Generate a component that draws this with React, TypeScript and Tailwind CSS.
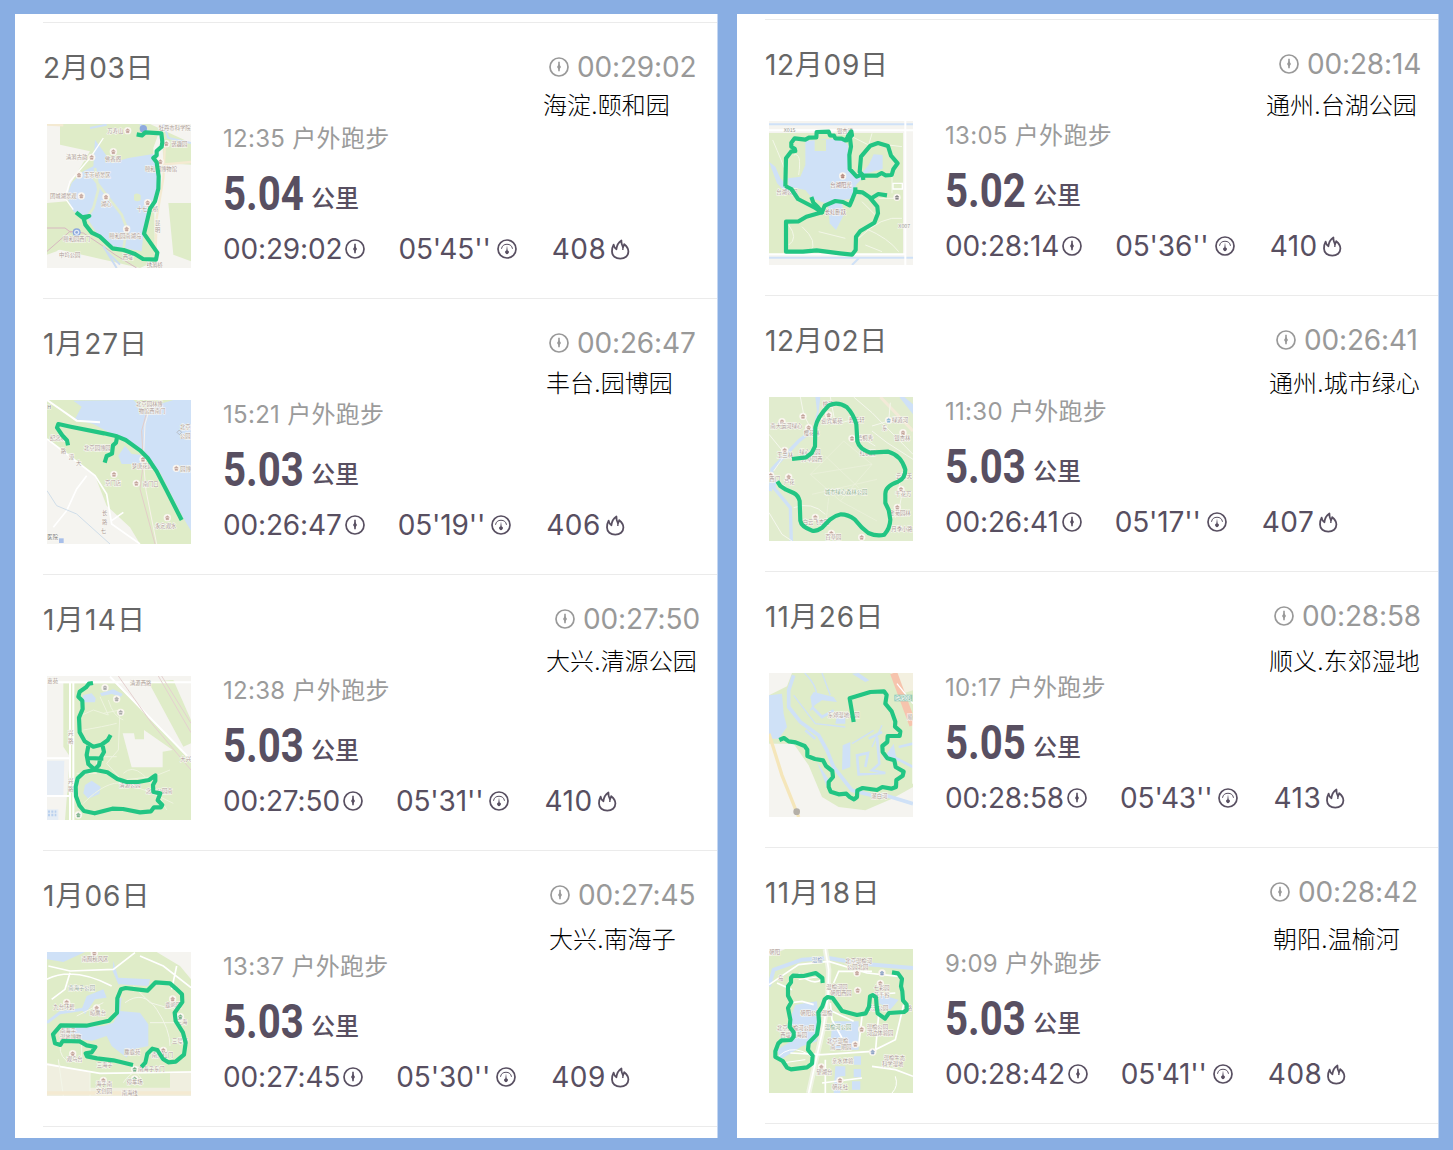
import React from 'react';

type Label = [number, number, string, string?];

interface MapProps {
  land: React.ReactNode;
  labels: Label[];
  pois?: [number, number, string?][];
  route: string[];
}

const GREEN = '#dfecc8';
const PAPER = '#f5f4f0';
const WATER = '#cfe1f7';

function RouteMap({ land, labels, pois = [], route }: MapProps) {
  return (
    <svg viewBox="21 18 432 432" className="block size-36 shrink-0">
      {land}
      {pois.map(([x, y, c], i) => (
        <g key={i}>
          <circle cx={x} cy={y} r="11" fill="#faf6f0" />
          <path d={`M${x - 6} ${y - 1}l6 -5l6 5zM${x - 4} ${y + 1}v5h8v-5`} fill={c ?? '#c4a59c'} stroke={c ?? '#c4a59c'} strokeWidth="1.5" />
        </g>
      ))}
      {labels.map(([x, y, t, c], i) => (
        <text
          key={i}
          x={x}
          y={y}
          fill={c ?? '#ab9a95'}
          stroke="#fbfaf5"
          strokeWidth="3"
          paintOrder="stroke"
          className="font-['Noto_Sans_CJK_SC',sans-serif] text-[16px]"
        >
          {t}
        </text>
      ))}
      {route.map((d) => (
        <path key={d} d={d} fill="none" stroke="#22c583" strokeWidth="12.5" strokeLinejoin="round" strokeLinecap="butt" />
      ))}
    </svg>
  );
}

const Base = ({ fill }: { fill: string }) => <rect x="21" y="18" width="432" height="432" fill={fill} />;
const Water = ({ d }: { d: string }) => <path d={d} fill={WATER} />;
const Land = ({ d, fill = GREEN }: { d: string; fill?: string }) => <path d={d} fill={fill} />;
const Road = ({ d, w = 4, c = '#fff' }: { d: string; w?: number; c?: string }) => (
  <path d={d} fill="none" stroke={c} strokeWidth={w} />
);

const SummerPalace = () => (
  <RouteMap
    land={
      <>
        <Base fill={PAPER} />
        <Land d="M60 18H330L453 75V140L370 135L365 20L340 90L345 430L300 450L60 395L21 400V255L80 250L90 200L150 100L60 80Z" />
        <Land d="M385 255H453V430L400 410Z" />
        <Land d="M21 270L75 285L120 340L50 400L21 410Z" />
        <Water d="M165 65L190 100L215 135L265 120L340 108L355 150L350 220L328 270L310 350L305 400L220 385L170 345L145 305L100 280L80 235L95 195L130 160L160 145Z" />
        <Land d="M282 230q10 -8 20 2v14q-10 8 -20 0z" />
        <Road d="M165 150L175 215L160 270L140 300M160 180L245 290L260 330L250 395" w={8} c="#e0ecd0" />
        <Road d="M190 60L150 120L90 190L75 240L100 275" w={4} />
        <Road d="M370 18L385 60L453 75M150 30L200 20M300 18L330 45" w={6} c={WATER} />
        <Road d="M375 70L370 180L350 300L345 450M365 140L453 132M21 20L70 22" w={7} c="#f4ead2" />
        <Road d="M21 400L90 340L130 345L190 385L225 410L290 450M21 330H75L95 345" w={3} c="#d7b8c0" />
        <Road d="M190 385L230 450M200 400L240 440" w={6} c="#cbdcf2" />
        <circle cx="310" cy="32" r="11" fill="#8ea9dd" />
        <circle cx="110" cy="343" r="12" fill="#8ea9dd" />
        <circle cx="110" cy="343" r="8" fill="#dfe8f7" />
        <circle cx="110" cy="343" r="4" fill="#8ea9dd" />
      </>
    }
    pois={[[263, 38], [220, 101], [155, 118], [117, 171], [124, 234], [198, 237], [379, 77], [361, 131], [323, 254], [260, 333]]}
    labels={[[202, 44, '万寿山'], [195, 128, '佛香阁'], [78, 124, '清漪古韵'], [132, 178, '玉带桥景区'], [30, 240, '团城湖景观'], [183, 263, '湖心'], [356, 35, '牡丹市科学院'], [394, 83, '谐趣园'], [315, 158, '颐和园博物馆'], [290, 280, '十七孔桥'], [208, 361, '颐和园南湖岛'], [70, 369, '颐和园西门'], [248, 423, '西堤'], [57, 418, '中坞公园'], [320, 446, '绣漪桥'], [345, 322, '昆'], [345, 342, '明']]}
    route={['M290 49L306 52L316 43L364 46L367 72L365 86L350 99V112L340 120L350 133L356 175L355 212L345 250L330 272L312 347L352 404L348 425L309 423L285 408L251 396L217 391L180 356L155 344L136 320L130 298', 'M108 283L127 298L148 294L128 304']}
  />
);

const GardenExpo = () => (
  <RouteMap
    land={
      <>
        <Base fill={PAPER} />
        <Land d="M21 18H453V450H300L270 400L200 335L165 245L120 210L21 135Z" />
        <Water d="M105 75L125 38L100 20L280 18L310 45L400 18H453V410L430 372L360 235L290 155L220 122L160 90Z" />
        <Water d="M235 185L255 155L275 180L300 182L320 210H245Z" />
        <Road d="M21 18L60 45L110 80L180 85" w={6} />
        <Road d="M21 135L100 195L165 245L200 300L215 390L300 450M215 380L250 355M140 245L110 285L80 350L40 400" w={5} />
        <Road d="M50 335L110 360L210 450M21 290L50 335" w={3} c="#cfdde9" />
        <Road d="M330 18L305 110L310 210L300 285L345 450" w={3} c="#e3cdc8" />
        <Road d="M335 25L315 90L310 200L318 290L350 450" w={3} c="#f8f2ec" />
        <path d="M418 108l7 7l-7 7l-7 -7z" fill="none" stroke="#aaa" strokeWidth="2" />
        <rect x="57" y="433" width="14" height="14" fill="#a8bfea" />
      </>
    }
    pois={[[222, 241], [289, 268], [309, 196], [382, 371], [409, 223]]}
    labels={[[22, 46, 'H', '#888'], [288, 36, '北京园林博'], [296, 57, '物馆西南门'], [420, 106, '北京'], [420, 132, '公园'], [30, 137, '纪念林'], [132, 169, '北京园博园'], [275, 222, '梦唐花园'], [195, 273, '京门店'], [308, 275, '南门口'], [345, 401, '永定观水'], [421, 230, '园博'], [186, 362, '长'], [186, 390, '路'], [182, 417, '七'], [22, 436, '医院', '#777'], [62, 178, '路'], [86, 196, '漳'], [108, 214, '大']]}
    route={['M84 154L81 139L66 123L51 101L55 90L92 98L192 118L231 127L257 138L300 169L323 192L350 232L380 290L425 378', 'M231 130L228 146L219 154L216 179L200 186L194 206']}
  />
);

const QingyuanPark = () => (
  <RouteMap
    land={
      <>
        <Base fill={PAPER} />
        <Land d="M70 40H225L453 270V450H75L90 260L70 230Z" />
        <Land d="M325 35L400 30L453 150V220L430 230Z" />
        <Land d="M248 190L282 190L285 208H312V180L398 240L368 245V292H275Z" fill={PAPER} />
        <path d="M21 272H73L70 378H21ZM21 418H55V450H21Z" fill="#e6edf5" />
        <Water d="M130 75L155 70L167 85L165 97H125Z" />
        <Water d="M180 70L220 58L248 72L243 80L215 72L185 78Z" />
        <Water d="M135 345L155 332L182 350L178 372L145 386L130 370Z" />
        <Road d="M21 37H453M90 37V450M100 37V450M21 265H90M21 378H90M210 20L453 270" w={6} />
        <Road d="M235 18L335 160L453 300M355 18L453 188M365 18L453 160" w={3} c="#e4d0cf" />
        <Road
          d="M115 140L160 120L205 135L180 80M190 130L240 120L235 240L200 280L245 330L340 320L390 300M130 180Q190 170 230 160M250 310Q300 260 380 420M130 400Q200 330 250 340T400 400M110 310H170V260H230M205 90Q220 140 250 150"
          w={3}
          c="#eef4df"
        />
        <path d="M24 425h25M24 435h25" stroke="#b9d0ee" strokeWidth="7" strokeDasharray="6 4" />
      </>
    }
    pois={[[195, 53, '#aaa'], [230, 87, '#aaa'], [242, 127, '#aaa'], [115, 435, '#79b18b']]}
    labels={[[22, 38, '嘉苑'], [270, 44, '清源西路'], [84, 195, '兴'], [84, 218, '路'], [84, 340, '兴'], [84, 363, '路'], [238, 350, '清源公园'], [318, 368, '念坛公园南'], [421, 272, '大兴']]}
    route={['M159 39L147 41L138 52L119 65L115 80L127 92L128 117L117 143L119 187L134 214L160 230L184 224L203 211L212 195', 'M145 228L140 255L145 282L164 299L177 285L181 265L192 246L188 228M143 264L190 266', 'M164 299L202 307L232 327L260 336L294 336L327 330L346 316L346 332L339 345L340 366L361 370L353 391L367 405L363 412L342 412L333 424L300 427L249 417L217 416L164 430L132 423L118 406L108 379L107 350L113 325L133 306L164 299']}
  />
);

const NanhaiziPark = () => (
  <RouteMap
    land={
      <>
        <Base fill={GREEN} />
        <Land d="M350 18H453V100L420 60Z" fill={PAPER} />
        <Land d="M21 350L180 385L453 375V450H21Z" fill="#f0efe0" />
        <Land d="M150 380H390V425H150Z" />
        <Water d="M21 18H135L70 48L21 40Z" />
        <Water d="M220 45L235 95L330 100L325 120L235 115L218 75Z" />
        <Water d="M60 245L130 242L190 240L220 230L240 195L300 200L325 235L325 300L270 312L260 335L215 300L200 270L155 285L60 270Z" />
        <Water d="M125 190L140 150L190 130L200 155L165 160L135 205Z" />
        <Road d="M240 155L235 210M21 230L60 200L130 190" w={9} c={WATER} />
        <Road d="M25 60L90 75L220 70L285 20M300 30L370 60L453 125M410 60L395 130M21 355L180 382L453 378M20 100Q100 60 215 120M90 80L75 130L35 160" w={5} />
        <Road d="M65 280Q90 260 125 280V345H80Q50 320 65 280M255 170Q310 130 350 190T390 300M280 120L330 170L400 190M330 230L410 230M110 210L190 170M55 340L70 450M150 380V450M250 410Q290 350 310 415" w={3} c="#f3f6e9" />
        <Road d="M21 441H453" w={10} c="#f4ead2" />
      </>
    }
    pois={[[163, 22], [80, 169], [170, 186], [398, 159], [421, 212, '#79b18b'], [98, 323], [190, 403], [284, 370, '#79b18b'], [284, 399, '#79b18b'], [370, 313]]}
    labels={[[125, 45, '南囿秋风区'], [85, 133, '南海子公园', '#98aaa0'], [40, 188, '九台环碧'], [150, 206, '晾鹰台'], [376, 182, '鹿鸣园'], [60, 260, '南海子'], [60, 280, '湿地博物'], [80, 344, '观鸟台'], [170, 363, '三海子'], [253, 323, '麋鹿苑'], [335, 334, '南大红门'], [294, 376, '南海子东门'], [260, 415, '停车场'], [168, 420, '海子南'], [168, 440, '文创园'], [245, 446, '南海线'], [396, 290, '三号桥'], [410, 235, '三海']]}
    route={['M279 357L220 343L171 337L141 331L137 322L155 319L166 303L140 298L119 286L68 285L61 297L45 292L39 265L62 238L139 239L207 224L231 200L232 157L243 130L257 126L322 134L347 109L390 112L407 127L426 145L427 168L404 200L407 225L429 260L437 290L432 326L407 347L385 349L369 339L352 312L337 308L322 323L316 350L304 363']}
  />
);

const TaihuPark = () => (
  <RouteMap
    land={
      <>
        <Base fill={PAPER} />
        <Land d="M21 54H423V418H21Z" />
        <Water d="M130 78L235 70L258 90L262 165L290 185L320 150L335 118L362 120V162L315 175L282 210L275 250L240 255L190 265L150 250L130 225L80 215L78 190L115 185L130 150Z" />
        <Water d="M198 265L240 262L245 300L222 345L203 325Z" />
        <Water d="M21 140L40 155L55 190L90 225L80 240L45 205Z" />
        <Land d="M158 75H192V108H158Z" />
        <Road d="M21 28H453M21 428H453M290 430L270 450" w={6} c={WATER} />
        <Road d="M21 46H453M430 18V450M21 418H430" w={6} />
        <Road d="M32 75Q60 140 75 180M80 330Q110 370 80 390M120 335Q170 380 145 410M170 350L250 370M290 370Q360 300 420 310M310 340Q380 370 410 410M300 260L340 300M340 85L420 95M390 180V235M270 65L320 90L330 55M350 250L415 250M95 120Q120 110 110 180M310 390L360 410" w={3} c="#f3f7e8" />
        <path d="M393 205h28v17h-28z" fill="none" stroke="#fff" strokeWidth="4" />
      </>
    }
    pois={[[242, 183, '#b08278'], [405, 247, '#888']]}
    labels={[[65, 51, 'X015', '#999'], [225, 54, '银杏湾'], [205, 216, '台湖阳光', '#9b8588'], [43, 237, '台湖公园'], [188, 298, '长虹卧跃', '#9b8588'], [409, 339, 'X007', '#999']]}
    route={['M70 215L72 130L87 110L100 108L98 101L88 95V83L98 70L130 74L141 68L163 67L164 51L200 50L204 61L216 62L220 70L239 71L250 76L263 61L267 95L262 120L263 162L284 185L302 178', 'M258 63L268 49L270 61L255 76Z', 'M304 195L302 180L293 171L297 125L325 92L348 84L378 93L387 122L407 145L394 163L389 180L370 181L359 174L345 182H302', 'M70 213L88 222L108 252L160 279L180 292L133 305L110 319L72 320V410H123L164 406L234 415L270 419L281 405L282 365L295 348L337 323L348 295L346 275L326 251L349 237L375 241', 'M148 246L154 263L168 277L180 292L188 272L220 258L243 261L263 271L272 250L280 230L301 232L326 249', 'M280 217V232']}
  />
);

const GreenHeart = () => (
  <RouteMap
    land={
      <>
        <Base fill="#e1ecce" />
        <Water d="M160 18H175L170 60L165 110L155 105L165 60ZM412 18H427L453 40V70Z" />
        <Road d="M40 265L35 290L85 350L88 450M155 115L110 150L30 235L25 300" w={10} c={WATER} />
        <Road d="M355 18L453 120" w={9} c="#f3ead8" />
        <Road d="M115 18L125 70L145 110M205 18L220 100L275 85M21 130L70 190L35 240M275 18L330 65L453 190M385 35L380 90L330 105M330 120L375 155L453 205M21 365L60 430L90 450M95 350Q150 330 190 370M410 270Q430 320 400 380M300 140L340 165" w={3} c="#f5f7ed" />
        <path d="M245 150L145 250L235 330L330 220ZM145 250L330 220M150 310L345 265M235 330L345 390M200 320L190 410M190 195L290 290" fill="none" stroke="#edf2de" strokeWidth="2" />
      </>
    }
    pois={[[200, 72], [123, 76], [140, 110], [68, 178], [60, 92], [270, 142], [423, 125], [80, 258], [26, 253], [417, 295], [406, 349], [160, 379], [208, 427], [299, 439], [380, 88, '#8fb8d8']]}
    labels={[[182, 45, '桃花'], [178, 95, '迎宾紫苑'], [25, 112, '南大运河绿心'], [125, 132, '樱花林'], [260, 93, '碧云轩'], [390, 92, '绿道河'], [397, 148, '银杏林'], [285, 148, '梧桐秀'], [45, 197, '玉兰林'], [112, 190, '绿心公园'], [118, 210, '芳草园西'], [293, 192, '红枫园'], [66, 280, '芦花'], [22, 271, '西门'], [188, 310, '城市绿心森林公园', '#8db18f'], [400, 315, '千花万'], [402, 262, '云景天'], [382, 371, '金菊园林'], [122, 399, '白云飞杏园'], [190, 445, '百草园'], [388, 419, '月季小路'], [360, 118, '东']]}
    route={['M90 204L132 199L149 186L159 166L160 109Q166 78 201 43Q227 30 255 49Q275 70 283 100L286 151Q292 175 325 185L379 182Q418 193 430 236Q430 262 408 272Q370 285 370 308L370 336L380 357L385 386Q384 412 367 431Q345 437 319 426L299 409L278 385Q258 370 237 370Q218 374 205 385L180 410Q162 422 151 419Q118 408 115 389L113 330Q108 312 95 306L72 296L55 285L46 271']}
  />
);

const DongjiaoWetland = () => (
  <RouteMap
    land={
      <>
        <Base fill={PAPER} />
        <Land d="M75 58L90 18H453V255L453 360L390 395L310 430L230 420L180 390L140 295L95 230H21V85Z" />
        <Land d="M385 18H453V70L420 80Z" fill="#f3f0e0" />
        <Water d="M21 85L60 80L65 140L75 180L50 215H21Z" />
        <Water d="M242 235L265 225V300L240 310ZM155 75L215 90L225 105L180 100L150 120L145 90ZM290 18L322 40L310 45L270 20ZM225 145H250V170H220ZM165 285L205 345L195 360ZM395 230L405 285L365 275Z" />
        <Road d="M345 210L352 290L330 310L370 318L290 322L285 265L318 258L310 300M150 120L180 150L215 130M130 190L160 215M360 195L320 215M410 240L453 230M395 270L453 300" w={8} c={WATER} />
        <Road d="M95 25L80 70V120L115 165L170 205L195 250L215 300L270 370L330 385H370L453 410" w={11} c={WATER} />
        <Road d="M128 18Q190 80 145 130M180 18L205 85M95 85L160 170L250 180M270 230L335 190M360 175L330 240" w={4} c={WATER} />
        <Road d="M21 200L60 325L110 450" w={10} c="#f5e6ba" />
        <Road d="M395 18L453 175" w={22} c="#f6c4ad" />
        <Road d="M453 160V350M405 50L453 110" w={4} />
        <rect x="397" y="83" width="54" height="20" fill="#96cdbb" />
        <circle cx="104" cy="434" r="10" fill="#b5b0a8" />
      </>
    }
    labels={[[197, 150, '东郊湿地公园'], [400, 99, 'G4501', '#6eb29e'], [328, 394, '潮白河'], [436, 157, '顺']]}
    route={['M275 165L263 94L325 75L366 73L374 84L370 110L389 133L400 164L399 179L415 193L413 207L377 207L376 225L361 237L362 255L376 274L397 280L401 300L425 314L422 326L403 339L402 360L388 365L361 360L345 369L302 363L286 370L285 390L276 397L263 390L253 380L230 382L206 374L200 360V345L213 330L211 312L192 297L183 280L159 276L136 267L136 248L128 237L101 226L80 223L66 213L52 219']}
  />
);

const Wenyuhe = () => (
  <RouteMap
    land={
      <>
        <Base fill={GREEN} />
        <path d="M21 130L35 80L120 50L200 45L300 62L453 75" fill="none" stroke={WATER} strokeWidth="12" />
        <Land d="M21 18H70L21 40Z" fill={PAPER} />
        <Water d="M100 185L165 175L170 235L165 295L120 310L55 350L45 320L95 290L75 250Z" />
        <Water d="M210 235H290V320H205ZM220 370H250V400H235V450H215ZM275 340H297V365H275ZM275 378H297V403H275ZM270 415H295V440H270ZM355 155L410 170L385 200L350 180Z" />
        <Road d="M190 18L200 80L198 160L185 250L160 360L140 450" w={16} c="#eff3e4" />
        <Road d="M190 18L200 80L198 160L185 250L160 360L140 450M21 125L110 65L200 55L315 90L410 100M85 330L180 335L330 325L400 290L425 185M45 120L90 140M80 180L120 175L155 185M215 120L230 85L330 85M205 180L210 230L240 285M330 155L400 150M300 220L290 310M350 215L340 330M190 350V450M330 370L400 380L453 400M180 420L300 405M110 90Q150 130 180 110M200 200L275 235" w={5} />
        <Road d="M50 340Q80 310 120 325T150 360M60 360L130 350M110 110L180 100M400 400Q410 430 390 450" w={3} />
      </>
    }
    pois={[[285, 90], [355, 121], [287, 142], [299, 259], [280, 304], [178, 372], [234, 412], [360, 90, '#8ca3c6'], [332, 327, '#8ca3c6']]}
    labels={[[22, 33, '朝阳'], [150, 58, '温榆', '#8ca3c6'], [250, 60, '北京温榆河'], [255, 78, '公园北园'], [193, 138, '温榆河园'], [205, 157, '朝阳西园'], [335, 142, '七彩园'], [335, 161, '花千谷'], [48, 112, '岛'], [315, 200, '乐活公园'], [115, 217, '朝阳公园温榆'], [45, 262, '北京温榆河公园'], [55, 281, '西堤花海园'], [188, 258, '温榆河公园', '#85ad91'], [314, 257, '温榆公园'], [314, 276, '河边体验园'], [195, 300, '北京温榆'], [205, 319, '南二期园'], [365, 350, '温榆生态'], [360, 369, '科学湿地'], [210, 360, '亲水体验'], [163, 394, '望湖台'], [210, 437, '朝花社'], [434, 202, '路']]}
    route={['M182 120L181 105L161 90L125 99L93 98L87 104V118L78 130V158L88 177L78 195L85 230L83 252L95 268V281L87 291L59 292L49 301L40 325V342L62 354L75 374L87 379L135 373L150 362L152 338L138 320L140 300L165 274L171 237L169 208L181 190L188 169L197 162L212 165L240 204L285 216L311 211L321 191L324 160L332 156L342 163L344 190L347 211L369 227L381 210L426 207L434 201V185L423 172L421 145L417 130L420 108L408 91L390 88']}
  />
);

const StopwatchIcon = () => (
  <svg viewBox="0 0 20 20" className="size-5 shrink-0" fill="none" stroke="currentColor" strokeWidth="1.7">
    <circle cx="10" cy="10" r="9" />
    <path d="M10 4.8V14.2" strokeWidth="1.6" />
    <path d="M10 6.8L12 10L10 13L8 10Z" fill="currentColor" stroke="none" />
  </svg>
);

const GaugeIcon = () => (
  <svg viewBox="0 0 20 20" className="size-5 shrink-0" fill="none" stroke="currentColor" strokeWidth="1.7">
    <circle cx="10" cy="10" r="9" />
    <path d="M4.5 9.8A5.6 5.6 0 0 1 15.5 9.8" strokeWidth="1" />
    <path d="M10 6.4L10.7 11.6A1.8 1.8 0 1 1 9.3 11.6Z" fill="currentColor" stroke="none" />
  </svg>
);

const FlameIcon = () => (
  <svg viewBox="0 0 20 21" className="h-[21px] w-5 shrink-0" fill="none" stroke="currentColor" strokeWidth="1.8" strokeLinejoin="round">
    <path d="M6.4 10.2C6.8 6.5 8.6 3.2 11.4 1.4C11.2 3.8 11.8 6 13 8.2C13.6 7.4 14 6.4 14.2 5.2C16.8 7.2 18.4 9.8 18.4 12.6C18.4 16.9 14.9 19.7 10.3 19.7C5.6 19.7 2 16.9 2 12.6C2 9.9 2.5 7.5 3.6 5.6C4 7.8 4.9 9.3 6.4 10.2Z" />
    <path d="M13 8.2L12.8 11" strokeWidth="1.4" />
  </svg>
);

interface Run {
  date: string;
  dateSpacing: string;
  time: string;
  start: string;
  km: string;
  pace: string;
  kcal: string;
  place: string;
  clockPad: string;
  placePad: string;
  map: React.ReactNode;
}

const leftRuns: Run[] = [
  { date: '2月03日', dateSpacing: 'tracking-[0.6px]', time: '00:29:02', start: '12:35', km: '5.04', pace: "05'45''", kcal: '408', place: '海淀.颐和园', clockPad: 'pl-[6px]', placePad: 'pl-0 pt-[7px]', map: <SummerPalace /> },
  { date: '1月27日', dateSpacing: 'tracking-[0.9px]', time: '00:26:47', start: '15:21', km: '5.03', pace: "05'19''", kcal: '406', place: '丰台.园博园', clockPad: 'pl-[6px]', placePad: 'pl-[3px] pt-[9px]', map: <GardenExpo /> },
  { date: '1月14日', dateSpacing: 'tracking-[1.3px]', time: '00:27:50', start: '12:38', km: '5.03', pace: "05'31''", kcal: '410', place: '大兴.清源公园', clockPad: 'pl-[12px]', placePad: 'pl-[3px] pt-[11px]', map: <QingyuanPark /> },
  { date: '1月06日', dateSpacing: 'tracking-[1px]', time: '00:27:45', start: '13:37', km: '5.03', pace: "05'30''", kcal: '409', place: '大兴.南海子', clockPad: 'pl-[7px]', placePad: 'pl-[6px] pt-[13px]', map: <NanhaiziPark /> },
];

const rightRuns: Run[] = [
  { date: '12月09日', dateSpacing: 'tracking-[0.7px]', time: '00:28:14', start: '13:05', km: '5.02', pace: "05'36''", kcal: '410', place: '通州.台湖公园', clockPad: 'pl-[14px]', placePad: 'pl-[1px] pt-[10px]', map: <TaihuPark /> },
  { date: '12月02日', dateSpacing: 'tracking-[0.6px]', time: '00:26:41', start: '11:30', km: '5.03', pace: "05'17''", kcal: '407', place: '通州.城市绿心', clockPad: 'pl-[11px]', placePad: 'pl-[4px] pt-[12px]', map: <GreenHeart /> },
  { date: '11月26日', dateSpacing: 'tracking-[1px]', time: '00:28:58', start: '10:17', km: '5.05', pace: "05'43''", kcal: '413', place: '顺义.东郊湿地', clockPad: 'pl-[9px]', placePad: 'pl-[4px] pt-[14px]', map: <DongjiaoWetland /> },
  { date: '11月18日', dateSpacing: 'tracking-[1.4px]', time: '00:28:42', start: '9:09', km: '5.03', pace: "05'41''", kcal: '408', place: '朝阳.温榆河', clockPad: 'pl-[5px]', placePad: 'pl-[8px] pt-[16px]', map: <Wenyuhe /> },
];

function RunCard({ run }: { run: Run }) {
  return (
    <article className="flex h-[276px] border-t border-[#ebebeb]">
      <div className="w-[500px] shrink-0 pt-[25px]">
        <h2 className="h-10 text-[28px] leading-10 text-[#666]">
          <span className={run.dateSpacing}>{run.date}</span>
        </h2>
        <div className="mt-9 flex pl-1">
          {run.map}
          <div className="ml-8 flex flex-col">
            <p className="mt-px h-7 text-2xl leading-7 tracking-[0.3px] text-[#9b9b9b]">{run.start} 户外跑步</p>
            <p className="mt-[13px] flex h-14 items-center text-[#584f61]">
              <span className="w-[88px] shrink-0">
                <span className="inline-block origin-left scale-x-[0.82] font-['Roboto',sans-serif] text-[49px] leading-[56px] font-bold">{run.km}</span>
              </span>
              <span className="pt-[10px] text-2xl leading-8 font-medium">公里</span>
            </p>
            <div className="mt-[9px] flex h-9 items-center text-[28px] leading-9 tracking-[-0.15px] text-[#584f61]">
              <span>{run.time}</span>
              <span className="ml-[3px]"><StopwatchIcon /></span>
              <span className="ml-[33px]">{run.pace}</span>
              <span className="ml-[6px]"><GaugeIcon /></span>
              <span className="ml-[35px] tracking-[0.5px]">{run.kcal}</span>
              <span className="ml-[4px]"><FlameIcon /></span>
            </div>
          </div>
        </div>
      </div>
      <div className="whitespace-nowrap pt-6">
        <div className={run.clockPad}>
          <div className="flex h-10 items-center text-[28px] leading-10 tracking-[-0.15px] text-[#999]">
            <StopwatchIcon />
            <span className="ml-2">{run.time}</span>
          </div>
        </div>
        <div className={run.placePad}>
          <div className="text-2xl leading-6 font-light text-black">{run.place}</div>
        </div>
      </div>
    </article>
  );
}

export default function App() {
  return (
    <main className="flex h-[1150px] w-[1453px] bg-[#89aee3] pt-[14px] pl-[15px] font-['Inter','Noto_Sans_CJK_SC',sans-serif]">
      <section className="h-[1124px] w-[703px] shrink-0 overflow-hidden border-r border-[#c5d7f2] bg-white pt-2 pl-7">
        {leftRuns.map((run) => (
          <RunCard key={run.date} run={run} />
        ))}
        <div className="h-px bg-[#ebebeb]" />
      </section>
      <section className="ml-[19px] h-[1124px] w-[702px] shrink-0 overflow-hidden border-r border-[#c5d7f2] bg-white pt-[5px] pl-7">
        {rightRuns.map((run) => (
          <RunCard key={run.date} run={run} />
        ))}
        <div className="h-px bg-[#ebebeb]" />
      </section>
    </main>
  );
}
